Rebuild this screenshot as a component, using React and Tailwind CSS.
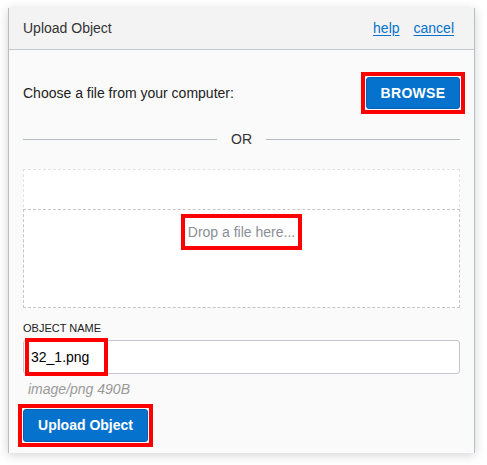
import React from 'react';

const font = { fontFamily: '"Liberation Sans", Arial, sans-serif' };

export default function App() {
  return (
    <div className="w-[487px] h-[465px] bg-white pt-2 pl-2" style={font}>
      <div className="w-[467px] h-[445px] flex flex-col bg-[#fafafa] border-x border-[#b9bdc5] shadow-[0_2px_10px_rgba(0,0,0,0.18)]">
        {/* header */}
        <div className="h-[42px] shrink-0 flex items-center justify-between bg-[#f3f3f3] border-b border-[#c4c8cf] pl-[14px] pr-[20px]">
          <span className="text-[14px] text-[#333]">Upload Object</span>
          <div className="flex gap-[14px] text-[14px] text-[#0572ce]">
            <a className="underline underline-offset-2">help</a>
            <a className="underline underline-offset-2">cancel</a>
          </div>
        </div>

        <div className="flex flex-col px-[14px]">
          <div className="mt-[26px] flex items-center justify-between">
            <span className="text-[14px] text-[#222]">Choose a file from your computer:</span>
            <span className="inline-flex p-px mr-[-1px] outline-4 outline-[#ff0000]">
              <button className="h-[32px] w-[94px] rounded-[3px] bg-[#0572ce] border border-[#0461b0] text-white font-bold text-[14px] tracking-[0.3px]">
                BROWSE
              </button>
            </span>
          </div>

          <div className="mt-[21px] h-[16px] flex items-center gap-[14px]">
            <div className="flex-1 h-px bg-[#b6bac2]" />
            <span className="text-[14px] text-[#333] leading-[16px]">OR</span>
            <div className="flex-1 h-px bg-[#b6bac2]" />
          </div>

          <div className="mt-[22px] h-[139px] flex flex-col bg-white border border-dashed border-[#e2e2e2]">
            <div className="mt-[39px] flex-1 flex justify-center border border-dashed border-[#c6c6c6] -mx-px -mb-px">
              <span className="mt-[8px] h-[28px] px-[3px] flex items-center text-[14px] text-[#8a8e96] outline-4 outline-[#ff0000]">
                Drop a file here...
              </span>
            </div>
          </div>

          <label className="mt-[14px] text-[11px] leading-[13px] text-[#222]">OBJECT NAME</label>
          <div className="mt-[5px] h-[34px] flex items-center bg-white border border-[#c2c5cc] rounded-[3px] pl-[5px]">
            <span className="h-[30px] w-[75px] flex items-center pl-[2px] text-[14px] text-black outline-4 outline-[#ff0000]">
              32_1.png
            </span>
          </div>
          <span className="mt-[6px] ml-[5px] text-[14px] leading-[18px] italic text-[#999]">image/png 490B</span>

          <div className="mt-[10px] ml-[-1px]">
            <span className="inline-flex p-px outline-4 outline-[#ff0000]">
              <button className="h-[33px] w-[125px] rounded-[3px] bg-[#0572ce] border border-[#0461b0] text-white font-bold text-[14px]">
                Upload Object
              </button>
            </span>
          </div>
        </div>
      </div>
    </div>
  );
}
